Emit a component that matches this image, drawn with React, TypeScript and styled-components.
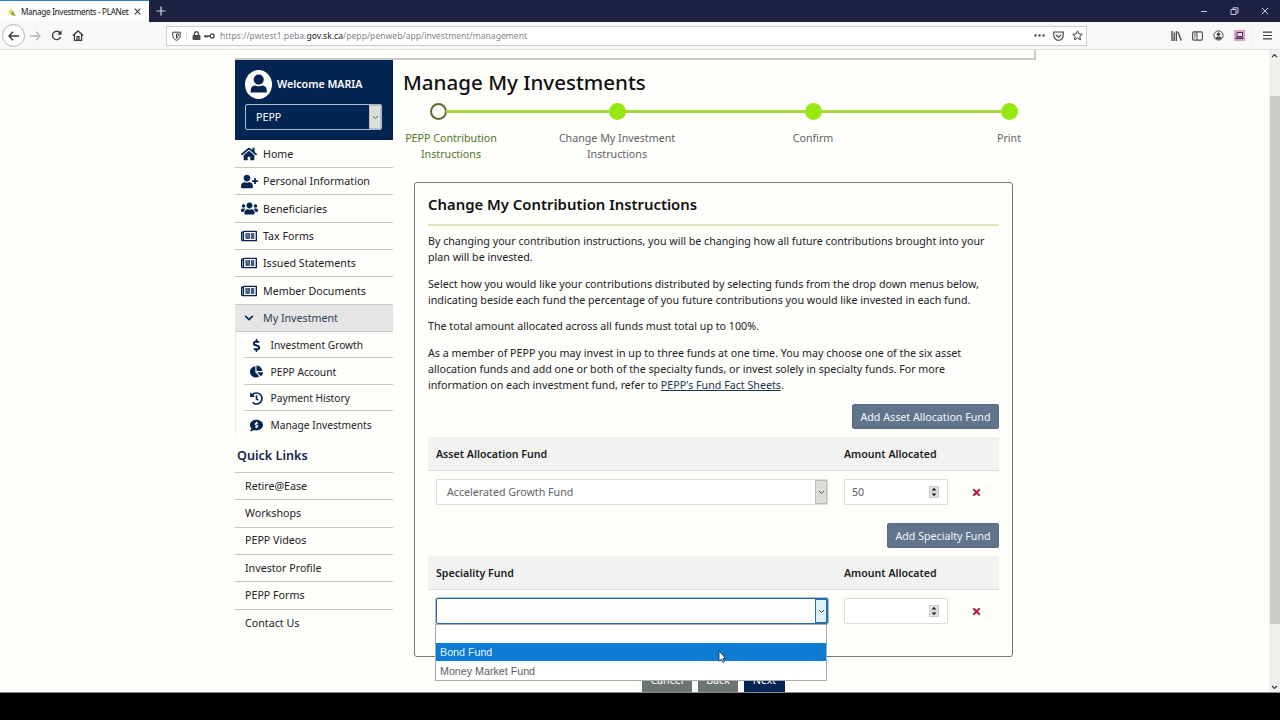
import React from "react";
import styled, { createGlobalStyle, css } from "styled-components";
import {
  FaHome,
  FaUserPlus,
  FaUsers,
  FaRegNewspaper,
  FaChevronDown,
  FaDollarSign,
  FaChartPie,
  FaHistory,
  FaCommentDollar,
  FaTimes,
  FaLock,
} from "react-icons/fa";

const navy = "#042552";

const GlobalStyle = createGlobalStyle`
  *, *::before, *::after { box-sizing: border-box; }
  body {
    margin: 0;
    overflow: hidden;
    background: #000;
    color: #202124;
    font: 10.68px/16px "Noto Sans", "Open Sans", sans-serif;
  }
  p, h1, h2, h3 { margin: 0; }
  button, input { font: inherit; }
  svg { display: block; flex: none; }
`;

/* ---------- Browser window ---------- */

const Window = styled.div`
  position: relative;
  display: flex;
  flex-direction: column;
  width: 1280px;
  height: 720px;
  background: #000;
`;

const TitleBar = styled.header`
  display: flex;
  height: 22px;
  background: #1e2142;
`;

const Tab = styled.div`
  display: flex;
  align-items: center;
  width: 149px;
  padding-left: 8px;
  border-top: 1px solid #2f7fd0;
  background: #fbfcfa;
  color: #17171c;
  font-size: 8.2px;
  letter-spacing: -0.33px;
  white-space: nowrap;
`;

const TabTitle = styled.span`
  width: 109px;
  margin: 1px 4px 0 5px;
`;

const NewTab = styled.div`
  display: flex;
  align-items: center;
  padding-left: 7px;
`;

const WindowControls = styled.div`
  display: flex;
  align-items: center;
  gap: 22px;
  margin-left: auto;
  padding-right: 11px;
`;

const Toolbar = styled.div`
  display: flex;
  align-items: center;
  height: 28px;
  padding-left: 2px;
  border-bottom: 1px solid #dcdddc;
  background: #f8f8f7;
`;

const NavButtons = styled.div`
  display: flex;
  align-items: center;
  width: 164px;
`;

const BackCircle = styled.div`
  display: grid;
  place-items: center;
  width: 23px;
  height: 23px;
  margin-right: 5px;
  border: 1px solid #b8b8b8;
  border-radius: 50%;
  background: #fdfdfd;
`;

const NavIcon = styled.div<{ $gap?: number }>`
  margin-right: ${(p) => p.$gap ?? 9}px;
`;

const AddressBar = styled.div`
  display: flex;
  align-items: center;
  width: 921px;
  height: 20px;
  padding: 0 3px 0 5px;
  border: 1px solid #cdcdcd;
  background: #fff;
`;

const Separator = styled.div`
  width: 1px;
  height: 10px;
  margin: 0 5px;
  background: #ddd;
`;

const KeyGlyph = styled.svg`
  margin-left: 3px;
`;

const Url = styled.span`
  margin: 1px 0 0 5px;
  color: #85858a;
  font-size: 8.6px;
  b { color: #222; font-weight: 400; }
`;

const AddressActions = styled.div`
  display: flex;
  align-items: center;
  gap: 8px;
  margin-left: auto;
`;

const ToolbarActions = styled.div`
  display: flex;
  align-items: center;
  gap: 10px;
  margin-left: auto;
  padding-right: 8px;
`;

const Avatar = styled.div`
  display: grid;
  place-items: center;
  width: 11px;
  height: 11px;
  background: #dfa3c6;
`;

const MenuDivider = styled.div`
  width: 1px;
  height: 18px;
  margin: 0 0 0 -3px;
  background: #eee;
`;

const Viewport = styled.div`
  display: flex;
  height: 643px;
  overflow: hidden;
  border-bottom: 1px solid #8b8c8b;
  background: #fefefb;
`;

const Page = styled.div`
  flex: 1;
  height: 642px;
  padding-left: 235px;
  overflow: hidden;
`;

const Scrollbar = styled.div`
  display: flex;
  flex-direction: column;
  align-items: center;
  justify-content: space-between;
  width: 11px;
  padding: 3px 0 2px;
  background: #f0f0ef;
`;

const Thumb = styled.div`
  width: 10px;
  height: 528px;
  margin: 0 0 24px;
  background: #cbcbca;
`;

/* ---------- Page frame ---------- */

const Banner = styled.div`
  width: 801px;
  height: 10px;
  border: solid #c9cac8;
  border-width: 0 2px 2px 0;
`;

const Columns = styled.div`
  display: flex;
  gap: 10px;
`;

const Sidebar = styled.aside`
  width: 158px;
`;

const ProfileCard = styled.div`
  height: 80px;
  margin-bottom: 0.5px;
  padding: 10px 10px 0;
  background: ${navy};
  color: #fff;
`;

const Profile = styled.div`
  display: flex;
  align-items: center;
  gap: 5px;
  height: 29px;
  font-weight: 600;
`;

const ProfileName = styled.span`
  margin-bottom: 1px;
`;

const PlanSelect = styled.div`
  display: flex;
  justify-content: space-between;
  align-items: center;
  width: 137px;
  height: 26px;
  margin-top: 5px;
  padding-left: 10px;
  border: 1px solid #a9bbd2;
  border-radius: 2px;
`;

const SelectArrow = styled.span<{ $open?: boolean }>`
  display: grid;
  place-items: center;
  align-self: stretch;
  width: 12px;
  border: 1px solid ${(p) => (p.$open ? "#2473b0" : "#bcbcba")};
  background: ${(p) => (p.$open ? "#def1fb" : "#deded9")};
`;

const NavItem = styled.div<{ $active?: boolean }>`
  display: flex;
  align-items: center;
  height: 27.35px;
  padding: 0.5px 0 0 5px;
  border-bottom: 1px solid #c6c8c6;
  ${(p) =>
    p.$active &&
    css`
      background: #e4e5e4;
      color: #2f3f55;
    `}
`;

const NavGlyph = styled.span`
  display: flex;
  justify-content: center;
  width: 18px;
  margin-right: 5px;
  color: ${navy};
`;

const SubNav = styled.div`
  padding-left: 8px;
  border-left: 1px solid #eeeeed;
`;

const SubNavItem = styled.div`
  display: flex;
  align-items: center;
  height: 26.5px;
  padding: 1px 0 0 3.6px;
  border-bottom: 1px solid #c6c8c6;
  font-size: 10.2px;
  &:last-child { border-bottom: 0; }
`;

const QuickHeading = styled.h3`
  height: 35px;
  padding: 10px 0 0 2px;
  border-bottom: 1px solid #c6c8c6;
  color: #14234f;
  font-size: 12.6px;
  font-weight: 600;
`;

const QuickLink = styled.div`
  display: flex;
  align-items: center;
  height: 27.35px;
  padding: 0 0 0.6px 10px;
  border-bottom: 1px solid #c6c8c6;
  &:last-child { border-bottom: 0; }
`;

/* ---------- Main column ---------- */

const Main = styled.main`
  width: 632px;
`;

const PageTitle = styled.h1`
  height: 43px;
  padding-top: 8px;
  color: #101010;
  font-size: 20.55px;
  line-height: 28px;
  font-weight: 500;
`;

const Stepper = styled.div`
  display: flex;
  height: 79px;
`;

const Step = styled.div<{ $width: number; $current?: boolean }>`
  flex: none;
  width: ${(p) => p.$width}px;
  color: ${(p) => (p.$current ? "#52762b" : "#5f6264")};
  text-align: center;
`;

const StepTrack = styled.div<{ $left: number }>`
  display: grid;
  grid-template-columns: ${(p) => p.$left}px 16px 1fr;
  align-items: center;
  height: 17px;
  margin-bottom: 10px;
`;

const Rail = styled.div<{ $hidden?: boolean }>`
  height: 3px;
  background: ${(p) => (p.$hidden ? "transparent" : "#a5d63c")};
`;

const Dot = styled.div<{ $current?: boolean }>`
  width: 17px;
  height: 17px;
  border: 2px solid ${(p) => (p.$current ? "#52702c" : "#96e812")};
  border-radius: 50%;
  background: ${(p) => (p.$current ? "#fefefb" : "#96e812")};
`;

const StepLabel = styled.div<{ $pad: number }>`
  padding-right: ${(p) => p.$pad}px;
  white-space: pre-line;
`;

const Card = styled.section`
  width: 599px;
  height: 475px;
  margin-left: 11px;
  padding: 12px 13px 0;
  border: 1px solid #747876;
  border-radius: 3px;
`;

const CardTitle = styled.h2`
  height: 31px;
  margin-bottom: 7px;
  border-bottom: 2px solid #e0e6b8;
  color: #101010;
  font-size: 14.87px;
  line-height: 19px;
  font-weight: 600;
`;

const Paragraph = styled.p`
  margin-bottom: 10.7px;
  white-space: pre;
`;

const SheetLink = styled.a`
  color: #1b3554;
  text-decoration: underline;
`;

const ActionRow = styled.div<{ $top: number }>`
  display: flex;
  justify-content: flex-end;
  margin: ${(p) => p.$top}px 0 8px;
`;

const AddButton = styled.button<{ $width: number }>`
  width: ${(p) => p.$width}px;
  height: 25px;
  padding: 0;
  border: 1px solid #566b82;
  border-radius: 2px;
  background: #60748b;
  color: #f2f7fb;
  white-space: nowrap;
`;

const FundGrid = styled.div`
  display: grid;
  grid-template-columns: 392px 104px 1fr;
  column-gap: 16px;
  align-items: center;
  padding-left: 8px;
`;

const FundHead = styled(FundGrid)`
  height: 34px;
  border-bottom: 1px solid #dcdedd;
  background: #f2f2f0;
  font-size: 10.6px;
  font-weight: 600;
`;

const FundRow = styled(FundGrid)`
  height: 26px;
  margin-top: 8px;
`;

const FundSelect = styled.div<{ $open?: boolean }>`
  position: relative;
  display: flex;
  justify-content: space-between;
  align-items: center;
  height: 26px;
  padding-left: 10px;
  border: 1px solid ${(p) => (p.$open ? "#2c6aa3" : "#dcdddb")};
  border-radius: 2px;
  background: #fff;
  color: #606264;
  ${(p) => p.$open && css`box-shadow: 0 0 0 1px #a8c0d6;`}
`;

const Options = styled.div`
  position: absolute;
  z-index: 2;
  top: 25px;
  left: -2px;
  width: 392px;
  height: 57px;
  border: 1px solid #a9abac;
  background: #fff;
  color: #5c6066;
  font: 10.7px/18px "Liberation Sans", Arial, sans-serif;
`;

const Option = styled.div<{ $selected?: boolean }>`
  height: 18px;
  padding-left: 4px;
  &:last-child { padding-top: 1px; }
  ${(p) =>
    p.$selected &&
    css`
      background: #0d7bd1;
      color: #e6f6ff;
    `}
`;

const AmountBox = styled.div`
  display: flex;
  justify-content: space-between;
  align-items: center;
  height: 26px;
  padding: 0 8px 0 7px;
  border: 1px solid #dcdddb;
  border-radius: 2px;
  background: #fff;
  color: #606264;
`;

const Remove = styled.span`
  padding-left: 7px;
  color: #b6173f;
`;

const FooterButtons = styled.div`
  display: flex;
  gap: 6px;
  margin: 10px 0 0 239px;
`;

const FooterButton = styled.button<{ $width: number; $primary?: boolean }>`
  width: ${(p) => p.$width}px;
  height: 26px;
  padding: 0;
  border: 0;
  border-radius: 2px;
  background: ${(p) => (p.$primary ? navy : "#6b7573")};
  color: #fff;
`;

const Cursor = styled.svg`
  position: absolute;
  z-index: 5;
  left: 718px;
  top: 650px;
`;

/* ---------- Small drawings ---------- */

type StrokeProps = { w: number; h: number; d: string; color?: string; sw?: number };

const Stroke = ({ w, h, d, color = "#3c3c40", sw = 1.3 }: StrokeProps) => (
  <svg width={w} height={h} viewBox={`0 0 ${w} ${h}`} fill="none" stroke={color} strokeWidth={sw}>
    <path d={d} />
  </svg>
);

const ProfileIcon = () => (
  <svg width="27" height="29" viewBox="0 0 27 29">
    <ellipse cx="13.5" cy="14.5" rx="13.5" ry="14.5" fill="#fff" />
    <circle cx="13.7" cy="9.6" r="5.1" fill={navy} />
    <path d="M5.7 22.6v-2.4c0-3 2-4.7 4.6-4.7 1.3.6 2.1.8 3.4.8s2.200-.2 3.400-.8c2.700 0 4.700 1.700 4.700 4.700v2.400z" fill={navy} />
  </svg>
);

const Spinner = () => (
  <svg width="10" height="12" viewBox="0 0 10 12">
    <path d="M0 0h10v12H0z" fill="#e4e4e1" />
    <path d="M.5.5h9v11h-9zM0 6h10" fill="none" stroke="#cbcbc8" />
    <path d="M2.5 4.5 5 1.800l2.500 2.700zM2.500 7.500 5 10.200l2.500-2.700z" fill="#222" />
  </svg>
);

const Caret = ({ color = "#55595c" }: { color?: string }) => (
  <Stroke w={7} h={5} d="M1 1l2.5 2.5L6 1" color={color} sw={1} />
);

const mainNav = [
  { label: "Home", icon: <FaHome size={16} /> },
  { label: "Personal Information", icon: <FaUserPlus size={17} /> },
  { label: "Beneficiaries", icon: <FaUsers size={17} /> },
  { label: "Tax Forms", icon: <FaRegNewspaper size={16} /> },
  { label: "Issued Statements", icon: <FaRegNewspaper size={16} /> },
  { label: "Member Documents", icon: <FaRegNewspaper size={16} /> },
];

const subNav = [
  { label: "Investment Growth", icon: <FaDollarSign size={13} /> },
  { label: "PEPP Account", icon: <FaChartPie size={13} /> },
  { label: "Payment History", icon: <FaHistory size={13} /> },
  { label: "Manage Investments", icon: <FaCommentDollar size={13} /> },
];

const quickLinks = ["Retire@Ease", "Workshops", "PEPP Videos", "Investor Profile", "PEPP Forms", "Contact Us"];

const steps = [
  { label: "PEPP Contribution\nInstructions", width: 116, left: 27, pad: 20, current: true },
  { label: "Change My Investment\nInstructions", width: 196, left: 90, pad: 0 },
  { label: "Confirm", width: 196, left: 90, pad: 0 },
  { label: "Print", width: 196, left: 90, pad: 0 },
];

const BrowserChrome = () => (
  <>
    <TitleBar>
      <Tab>
        <svg width="8" height="10" viewBox="0 0 8 10">
          <path d="M0 7 3 1l1 5z" fill="#d9dc3c" />
          <path d="M3 8 4 3l4 6z" fill="#7fae2e" />
        </svg>
        <TabTitle>Manage Investments - PLANet</TabTitle>
        <Stroke w={7} h={7} d="M.7.7l5.6 5.6M6.3.7.7 6.3" sw={1.1} />
      </Tab>
      <NewTab>
        <Stroke w={10} h={10} d="M5 .5v9M.5 5h9" color="#d6d8e6" sw={1.2} />
      </NewTab>
      <WindowControls>
        <Stroke w={8} h={8} d="M1 4.5h6" color="#c9cbdc" sw={1} />
        <Stroke w={9} h={8} d="M1 2.5h5v5H1zM3 2V.8h5V6H6.5" color="#c9cbdc" sw={1} />
        <Stroke w={8} h={8} d="M.8.8l6.4 6.4M7.2.8.8 7.2" color="#c9cbdc" sw={1} />
      </WindowControls>
    </TitleBar>
    <Toolbar>
      <NavButtons>
        <BackCircle>
          <Stroke w={11} h={10} d="M5 .8 1 5l4 4.2M1 5h10" sw={1.5} />
        </BackCircle>
        <NavIcon $gap={10}>
          <Stroke w={11} h={10} d="M6 .8 10 5 6 9.2M10 5H0" color="#b5b5b7" />
        </NavIcon>
        <NavIcon $gap={10}>
          <svg width="11" height="11" viewBox="0 0 11 11">
            <path d="M9 2.8A4.2 4.2 0 1 0 9.6 7" fill="none" stroke="#3c3c40" strokeWidth="1.4" />
            <path d="M10.6.3v4.5H6.2z" fill="#3c3c40" />
          </svg>
        </NavIcon>
        <NavIcon>
          <Stroke w={12} h={11} d="M.8 5.6 6 .9l5.2 4.7M2.4 4.8v5.5h7.2V4.8M5 10V6.7h2V10" sw={1.3} />
        </NavIcon>
      </NavButtons>
      <AddressBar>
        <Stroke w={9} h={10} d="M.8 1.2h7.4v3.2c0 2.5-1.5 4-3.7 5-2.2-1-3.7-2.5-3.7-5zM4.5 3v4.4L6.3 5V3z" sw={1} />
        <Separator />
        <FaLock size={9} color="#4c4c50" />
        <KeyGlyph width="11" height="6" viewBox="0 0 11 6" fill="none" stroke="#4c4c50" strokeWidth="1.3">
          <path d="M0 3h6M1.6 3v1.8M3.6 3v1.6" />
          <circle cx="8.2" cy="3" r="2" />
        </KeyGlyph>
        <Url>
          https://pwtest1.peba.<b>gov.sk.ca</b>/pepp/penweb/app/investment/management
        </Url>
        <AddressActions>
          <svg width="11" height="3" viewBox="0 0 11 3" fill="#4c4c50">
            <circle cx="1.5" cy="1.5" r="1.2" />
            <circle cx="5.5" cy="1.5" r="1.2" />
            <circle cx="9.5" cy="1.5" r="1.2" />
          </svg>
          <Stroke w={11} h={10} d="M.8 1h9.4v3.5a4.7 4.7 0 0 1-9.4 0zM3 4l2.5 2.3L8 4" sw={1.1} />
          <Stroke w={11} h={11} d="M5.5.9l1.4 3 3.3.4-2.4 2.2.7 3.3-3-1.7-3 1.7.7-3.3L.8 4.3l3.3-.4z" sw={1} />
        </AddressActions>
      </AddressBar>
      <ToolbarActions>
        <svg width="11" height="10" viewBox="0 0 11 10" fill="none" stroke="#4c4c50" strokeWidth="1.4">
          <path d="M1 0v10M3.2 1.5V10M5.4 0v10M7 .8 10.2 9.6" />
        </svg>
        <svg width="11" height="10" viewBox="0 0 11 10">
          <rect x=".6" y=".9" width="9.8" height="8.2" rx="1.3" fill="none" stroke="#4c4c50" strokeWidth="1.1" />
          <path d="M5 1v8M2 3h2M2 5h2M2 7h1" stroke="#4c4c50" />
        </svg>
        <svg width="11" height="11" viewBox="0 0 11 11">
          <circle cx="5.5" cy="5.5" r="4.6" fill="none" stroke="#4c4c50" strokeWidth="1" />
          <circle cx="5.5" cy="4.2" r="1.8" fill="#4c4c50" />
          <path d="M2.3 8c.8-2 5.6-2 6.4 0-1.8 2-4.6 2-6.4 0z" fill="#4c4c50" />
        </svg>
        <Avatar>
          <svg width="9" height="9" viewBox="0 0 9 9">
            <path d="M2 1.5h5.5v4H2z" fill="#f5dff0" stroke="#4b2b5c" />
            <path d="M.5 6.5h8V8h-8z" fill="#4b2b5c" />
          </svg>
        </Avatar>
        <MenuDivider />
        <Stroke w={9} h={9} d="M0 1.2h9M0 4.5h9M0 7.8h9" sw={1.2} />
      </ToolbarActions>
    </Toolbar>
  </>
);

const SideNavigation = () => (
  <Sidebar>
    <ProfileCard>
      <Profile>
        <ProfileIcon />
        <ProfileName>Welcome MARIA</ProfileName>
      </Profile>
      <PlanSelect>
        PEPP
        <SelectArrow>
          <Caret />
        </SelectArrow>
      </PlanSelect>
    </ProfileCard>
    {mainNav.map((item) => (
      <NavItem key={item.label}>
        <NavGlyph>{item.icon}</NavGlyph>
        {item.label}
      </NavItem>
    ))}
    <NavItem $active>
      <NavGlyph>
        <FaChevronDown size={10} />
      </NavGlyph>
      My Investment
    </NavItem>
    <SubNav>
      {subNav.map((item) => (
        <SubNavItem key={item.label}>
          <NavGlyph>{item.icon}</NavGlyph>
          {item.label}
        </SubNavItem>
      ))}
    </SubNav>
    <QuickHeading>Quick Links</QuickHeading>
    <div>
      {quickLinks.map((label) => (
        <QuickLink key={label}>{label}</QuickLink>
      ))}
    </div>
  </Sidebar>
);

const Progress = () => (
  <Stepper>
    {steps.map((step, i) => (
      <Step key={step.label} $width={step.width} $current={step.current}>
        <StepTrack $left={step.left}>
          <Rail $hidden={i === 0} />
          <Dot $current={step.current} />
          <Rail $hidden={i === steps.length - 1} />
        </StepTrack>
        <StepLabel $pad={step.pad}>{step.label}</StepLabel>
      </Step>
    ))}
  </Stepper>
);

const ContributionCard = () => (
  <Card>
    <CardTitle>Change My Contribution Instructions</CardTitle>
    <Paragraph>
      {"By changing your contribution instructions, you will be changing how all future contributions brought into your\nplan will be invested."}
    </Paragraph>
    <Paragraph>
      {"Select how you would like your contributions distributed by selecting funds from the drop down menus below,\nindicating beside each fund the percentage of you future contributions you would like invested in each fund."}
    </Paragraph>
    <Paragraph>The total amount allocated across all funds must total up to 100%.</Paragraph>
    <Paragraph>
      {"As a member of PEPP you may invest in up to three funds at one time. You may choose one of the six asset\nallocation funds and add one or both of the specialty funds, or invest solely in specialty funds. For more\ninformation on each investment fund, refer to "}
      <SheetLink>PEPP's Fund Fact Sheets</SheetLink>.
    </Paragraph>
    <ActionRow $top={11.2}>
      <AddButton $width={147}>Add Asset Allocation Fund</AddButton>
    </ActionRow>
    <FundHead>
      <span>Asset Allocation Fund</span>
      <span>Amount Allocated</span>
    </FundHead>
    <FundRow>
      <FundSelect>
        Accelerated Growth Fund
        <SelectArrow>
          <Caret />
        </SelectArrow>
      </FundSelect>
      <AmountBox>
        50
        <Spinner />
      </AmountBox>
      <Remove>
        <FaTimes size={11} />
      </Remove>
    </FundRow>
    <ActionRow $top={18}>
      <AddButton $width={112}>Add Specialty Fund</AddButton>
    </ActionRow>
    <FundHead>
      <span>Speciality Fund</span>
      <span>Amount Allocated</span>
    </FundHead>
    <FundRow>
      <FundSelect $open>
        <span />
        <SelectArrow $open>
          <Caret color="#1f3f5c" />
        </SelectArrow>
        <Options>
          <Option />
          <Option $selected>Bond Fund</Option>
          <Option>Money Market Fund</Option>
        </Options>
      </FundSelect>
      <AmountBox>
        <span />
        <Spinner />
      </AmountBox>
      <Remove>
        <FaTimes size={11} />
      </Remove>
    </FundRow>
  </Card>
);

export default function App() {
  return (
    <Window>
      <GlobalStyle />
      <BrowserChrome />
      <Viewport>
        <Page>
          <Banner />
          <Columns>
            <SideNavigation />
            <Main>
              <PageTitle>Manage My Investments</PageTitle>
              <Progress />
              <ContributionCard />
              <FooterButtons>
                <FooterButton $width={50}>Cancel</FooterButton>
                <FooterButton $width={40}>Back</FooterButton>
                <FooterButton $width={41} $primary>
                  Next
                </FooterButton>
              </FooterButtons>
            </Main>
          </Columns>
        </Page>
        <Scrollbar>
          <Stroke w={7} h={5} d="M1 4l2.5-2.5L6 4" sw={1.2} />
          <Thumb />
          <Stroke w={7} h={5} d="M1 1l2.5 2.5L6 1" sw={1.2} />
        </Scrollbar>
      </Viewport>
      <Cursor width="8" height="13" viewBox="0 0 8 13">
        <path d="M1 .8v10.4l2.3-2 1.5 3.2 1.5-.7-1.4-3.1h2.8z" fill="#fff" stroke="#17345a" strokeWidth=".9" />
      </Cursor>
    </Window>
  );
}
